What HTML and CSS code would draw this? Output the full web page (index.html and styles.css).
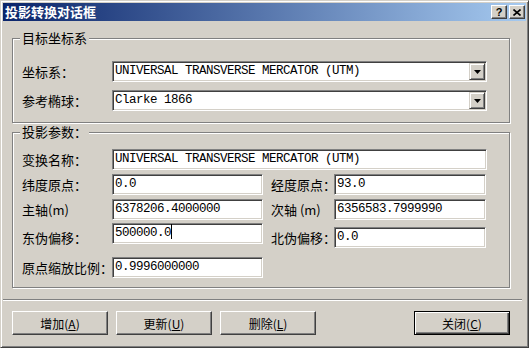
FILE: index.html
```html
<!DOCTYPE html>
<html lang="zh-CN">
<head>
  <meta charset="UTF-8">
  <title>投影转换对话框</title>
  <link rel="stylesheet" href="styles.css">
</head>
<body>
  <div class="window">
    <div class="titlebar">
      <span class="title">投影转换对话框</span>
      <div class="caption-btns">
        <span class="cap-btn">?</span>
        <span class="cap-btn">
          <svg width="8" height="7" viewBox="0 0 8 7"><path d="M0.5 0.5 L7.5 6.5 M7.5 0.5 L0.5 6.5" stroke="#000" stroke-width="1.6" fill="none"/></svg>
        </span>
      </div>
    </div>

    <div class="client">
      <div class="group group-target">
        <div class="group-title">目标坐标系</div>
        <div class="rows rows-target">
          <div class="row">
            <span class="lbl">坐标系：</span>
            <div class="combo">
              <span class="combo-text">UNIVERSAL TRANSVERSE MERCATOR (UTM)</span>
              <span class="drop-btn"><svg width="7" height="4" viewBox="0 0 7 4"><path d="M0 0 H7 L3.5 4 Z" fill="#000"/></svg></span>
            </div>
          </div>
          <div class="row">
            <span class="lbl">参考椭球：</span>
            <div class="combo">
              <span class="combo-text">Clarke 1866</span>
              <span class="drop-btn"><svg width="7" height="4" viewBox="0 0 7 4"><path d="M0 0 H7 L3.5 4 Z" fill="#000"/></svg></span>
            </div>
          </div>
        </div>
      </div>

      <div class="group group-params">
        <div class="group-title">投影参数：</div>
        <div class="rows rows-params">
          <div class="row">
            <span class="lbl">变换名称：</span>
            <div class="edit edit-wide">UNIVERSAL TRANSVERSE MERCATOR (UTM)</div>
          </div>
          <div class="row">
            <span class="lbl">纬度原点：</span>
            <div class="edit edit-left">0.0</div>
            <span class="lbl lbl-right">经度原点：</span>
            <div class="edit edit-right">93.0</div>
          </div>
          <div class="row">
            <span class="lbl">主轴(m)</span>
            <div class="edit edit-left">6378206.4000000</div>
            <span class="lbl lbl-right">次轴 (m)</span>
            <div class="edit edit-right">6356583.7999990</div>
          </div>
          <div class="row row-offset">
            <span class="lbl">东伪偏移：</span>
            <div class="edit edit-left">500000.0<span class="caret"></span></div>
            <div class="pair-shift">
              <span class="lbl lbl-right">北伪偏移：</span>
              <div class="edit edit-right">0.0</div>
            </div>
          </div>
          <div class="row row-scale">
            <span class="lbl">原点缩放比例：</span>
            <div class="edit edit-left">0.9996000000</div>
          </div>
        </div>
      </div>

      <div class="separator"></div>

      <div class="buttons">
        <button class="btn">增加(<u>A</u>)</button>
        <button class="btn">更新(<u>U</u>)</button>
        <button class="btn">删除(<u>L</u>)</button>
        <button class="btn btn-default">关闭(<u>C</u>)</button>
      </div>
    </div>
  </div>
</body>
</html>
```

FILE: styles.css
```css
:root {
  --face: #d4d0c8;
  --shadow: #808080;
  --dark: #404040;
  --light: #fff;
}

body {
  margin: 0;
  font-family: "Noto Sans CJK SC", sans-serif;
  background-color: var(--face);
}

.window {
  width: 529px;
  height: 348px;
  box-sizing: border-box;
  border: 1px solid;
  border-color: var(--face) var(--dark) var(--dark) var(--face);
  box-shadow: inset 1px 1px var(--light), inset -1px -1px var(--shadow);
  padding: 2px;
  background-color: var(--face);
  display: flex;
  flex-direction: column;
}

.titlebar {
  height: 18px;
  background: linear-gradient(to right, #0a246a, #a6caf0);
  display: flex;
  align-items: center;
  justify-content: space-between;
  padding: 0 1px 0 2px;
}

.title {
  color: #fff;
  font-weight: 700;
  font-size: 13px;
  line-height: 18px;
}

.caption-btns {
  display: flex;
  gap: 2px;
}

.cap-btn {
  width: 16px;
  height: 14px;
  box-sizing: border-box;
  border: 1px solid;
  border-color: var(--light) var(--dark) var(--dark) var(--light);
  box-shadow: inset -1px -1px var(--shadow);
  background-color: var(--face);
  display: flex;
  align-items: center;
  justify-content: center;
  font-family: "Liberation Sans", sans-serif;
  font-weight: 700;
  font-size: 11px;
  line-height: 12px;
  color: #000;
}

.client {
  flex: 1;
  display: flex;
  flex-direction: column;
}

/* group boxes */
.group {
  width: 498px;
  box-sizing: border-box;
  margin-left: 9px;
  border: 1px solid var(--shadow);
  box-shadow: inset 1px 1px var(--light), 1px 1px var(--light);
  padding: 0 0 11px 9px;
}

.group-target {
  margin-top: 17px;
}

.group-params {
  margin-top: 9px;
  padding-bottom: 9px;
}

.group-title {
  display: table;
  margin: -8px 0 0 -2px;
  padding: 0 2px;
  background-color: var(--face);
  font-size: 13px;
  line-height: 14px;
  color: #000;
}

.rows {
  display: flex;
  flex-direction: column;
}

.rows-target {
  margin-top: 16px;
  gap: 8px;
}

.rows-params {
  margin-top: 10px;
  gap: 4px;
}

.row {
  display: flex;
  align-items: center;
  min-height: 21px;
}

.row-offset {
  align-items: flex-start;
  margin-top: -1px;
}

.pair-shift {
  display: flex;
  align-items: center;
  margin-top: 4px;
}

/* the left label of this row sits level with the shifted right pair */
.row-offset > .lbl {
  height: 21px;
  margin-top: 4px;
  display: flex;
  align-items: center;
}

.row-scale {
  margin-top: 5px;
}

.lbl {
  width: 90px;
  flex-shrink: 0;
  font-size: 13px;
  line-height: 15px;
  color: #000;
  white-space: nowrap;
}

.lbl-right {
  width: 63px;
  margin-left: 8px;
}

/* sunken fields */
.edit,
.combo {
  box-sizing: border-box;
  height: 21px;
  border: 1px solid;
  border-color: var(--shadow) var(--light) var(--light) var(--shadow);
  box-shadow: inset 1px 1px var(--dark), inset -1px -1px var(--face);
  background-color: #fff;
  font-family: "Liberation Mono", monospace;
  font-size: 12.5px;
  letter-spacing: -0.5px;
  line-height: 19px;
  color: #000;
  white-space: nowrap;
  overflow: hidden;
}

.edit {
  padding-left: 2px;
}

.edit-wide {
  width: 375px;
}

.edit-left {
  width: 151px;
}

.edit-right {
  width: 152px;
}

.caret {
  display: inline-block;
  width: 1px;
  height: 15px;
  background-color: #000;
  vertical-align: -3px;
}

.combo {
  width: 375px;
  display: flex;
  align-items: center;
  justify-content: space-between;
  padding: 1px 1px 1px 2px;
}

.drop-btn {
  width: 16px;
  height: 17px;
  box-sizing: border-box;
  border: 1px solid;
  border-color: var(--face) var(--dark) var(--dark) var(--face);
  box-shadow: inset 1px 1px var(--light), inset -1px -1px var(--shadow);
  background-color: var(--face);
  display: flex;
  align-items: center;
  justify-content: center;
}

.separator {
  margin: 11px 4px 0 0;
  border-top: 1px solid var(--shadow);
  border-bottom: 1px solid var(--light);
}

.buttons {
  display: flex;
  gap: 8px;
  margin-top: 10px;
  padding: 0 16px 0 9px;
}

.btn {
  width: 96px;
  height: 24px;
  box-sizing: border-box;
  border: 1px solid;
  border-color: var(--light) var(--dark) var(--dark) var(--light);
  box-shadow: inset -1px -1px var(--shadow);
  background-color: var(--face);
  font-family: "Noto Sans CJK SC", sans-serif;
  font-size: 12px;
  color: #000;
  padding: 0;
}

.btn-default {
  margin-left: auto;
  border-color: #000;
  box-shadow: inset 1px 1px var(--light), inset -1px -1px var(--dark), inset -2px -2px var(--shadow);
}
```
